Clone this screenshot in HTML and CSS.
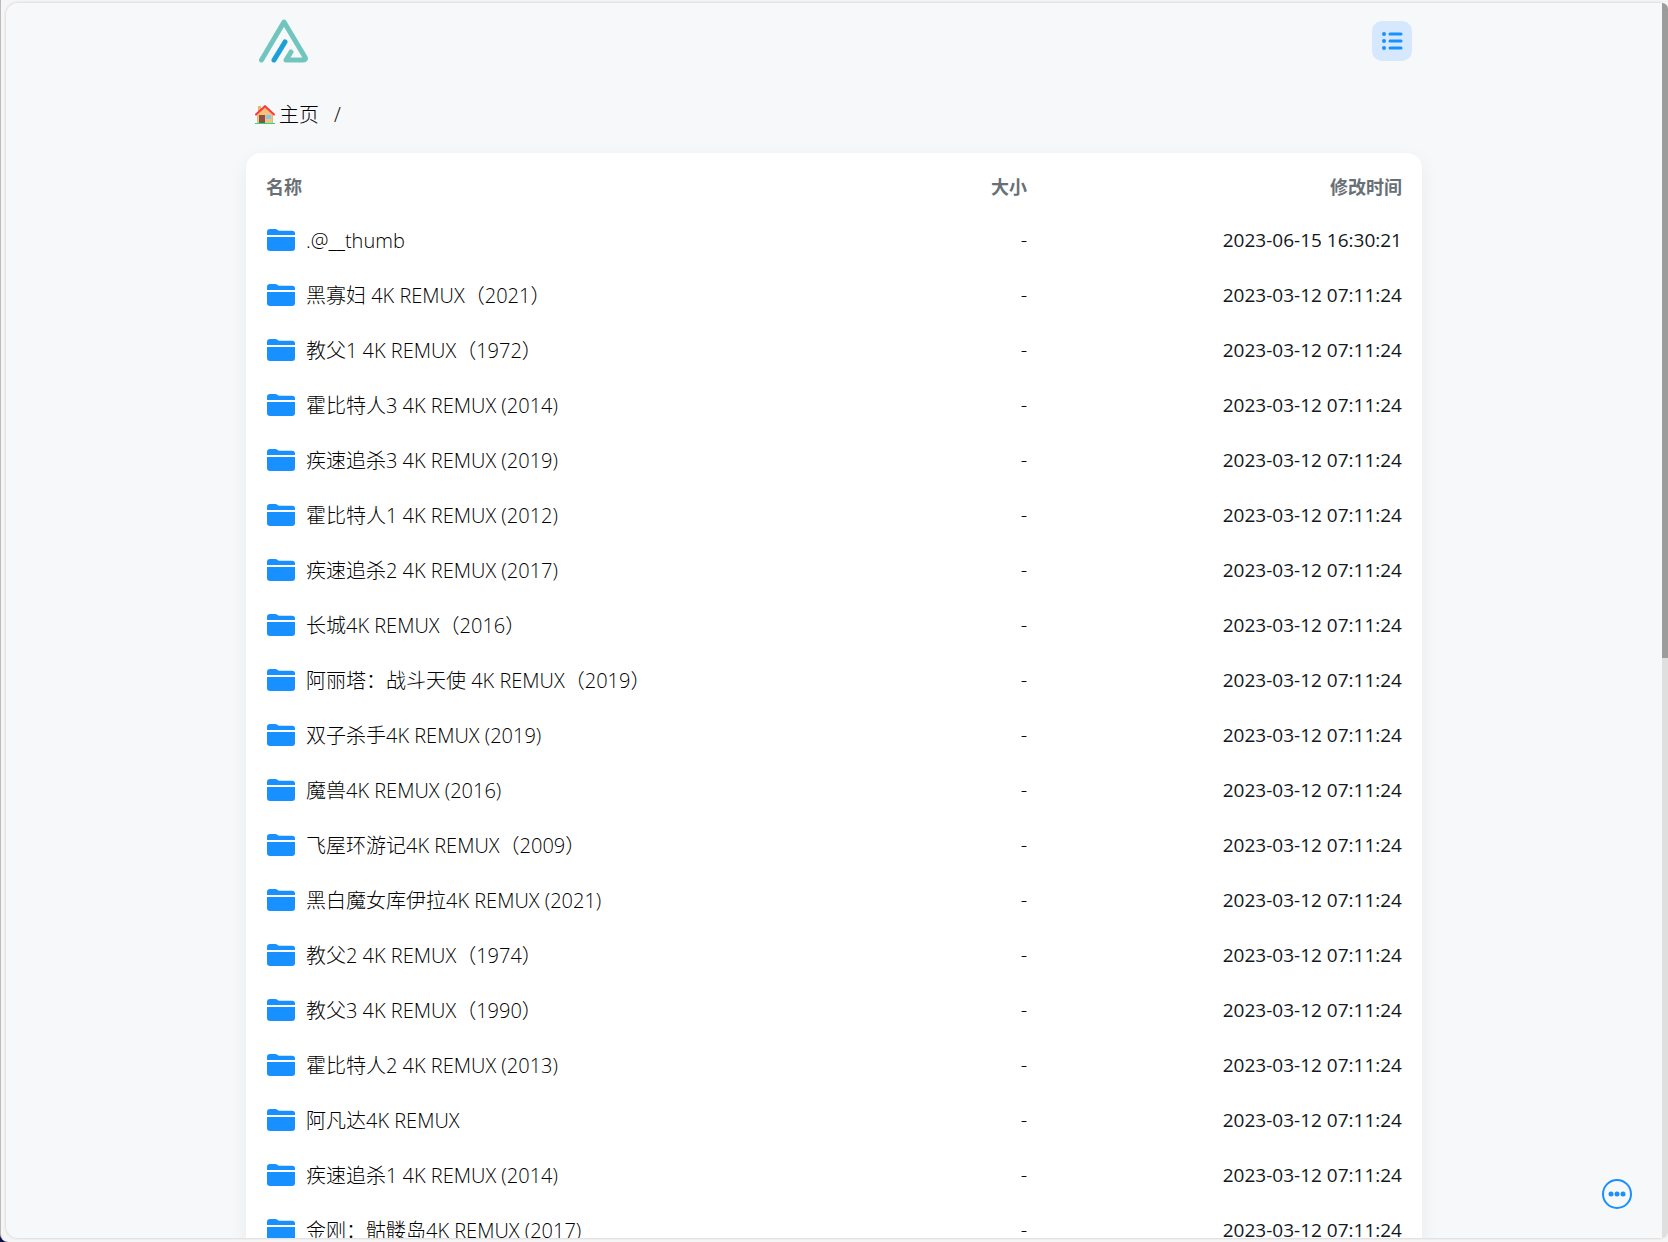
FILE: index.html
```html
<!DOCTYPE html>
<html lang="zh-CN">
<head>
    <meta charset="UTF-8">
    <meta name="viewport" content="width=device-width, initial-scale=1.0">
    <title>主页</title>
    <link rel="stylesheet" href="styles.css">
</head>
<body>

<!-- Shared icons -->
<svg class="sprite" aria-hidden="true">
    <symbol id="folder" viewBox="0 0 28 24">
        <path d="M0 7V4Q0 1 3 1H8Q9.500 1 11 2.200Q11.800 2.800 13 2.800H25Q28 2.800 28 5.500V7Z"/>
        <path d="M0 9H28V20Q28 23 25 23H3Q0 23 0 20Z"/>
    </symbol>
</svg>

<div class="frame">
    <div class="window">
        <div class="page">
            <header class="header">
                <a href="#" class="logo" aria-label="首页">
                    <svg viewBox="0 0 52 46">
                        <path stroke="#70c6be" d="M3.500 42L26 4L47.200 39.500Q48 42 45.500 42H28L33 34"/>
                        <path stroke="#1ba0d8" d="M16 42L27 24"/>
                    </svg>
                </a>
                <button class="layout-button" aria-label="列表视图">
                    <svg viewBox="0 0 24 24" stroke="currentColor" stroke-linecap="round">
                        <path stroke-width="3" d="M10 5H21M10 12H21M10 19H21"/>
                        <path stroke-width="4" d="M4 5H4.010M4 12H4.010M4 19H4.010"/>
                    </svg>
                </button>
            </header>

            <nav class="breadcrumb">
                <a href="#">
                    <svg viewBox="0 0 20 20">
                        <path fill="#f2b36b" d="M3 1H6V6H3ZM2 10L10 2L18 10V18H2Z"/>
                        <path fill="#f8c07a" d="M3 10L10 3L17 10V18H3Z"/>
                        <path fill="#8b5144" d="M4 10H10V18H4Z"/>
                        <path fill="#83c8f5" d="M11 10H16V14H11Z"/>
                        <path fill="none" stroke="#f8393c" stroke-width="2" stroke-linecap="round" d="M1 9.500L10 1.200L19 9.500"/>
                        <path fill="#07e78c" d="M0 18H20V19H0Z"/>
                    </svg>
                    主页
                </a>
                <span>/</span>
            </nav>

            <main class="card">
                <table class="files">
                    <thead>
                        <tr><th class="name">名称</th><th class="size">大小</th><th class="time">修改时间</th></tr>
                    </thead>
                    <tbody id="file-list"></tbody>
                </table>
            </main>
        </div>
    </div>
    <div class="scrollbar"><div class="thumb"></div></div>
</div>

<button class="more-button" aria-label="更多">
    <svg viewBox="0 0 30 30">
        <circle cx="15" cy="15" r="14" fill="none" stroke="currentColor" stroke-width="2"/>
        <circle cx="9" cy="15" r="2.500"/>
        <circle cx="15" cy="15" r="2.500"/>
        <circle cx="21" cy="15" r="2.500"/>
    </svg>
</button>

<script src="script.js"></script>
</body>
</html>
```

FILE: styles.css
```css
* {
    box-sizing: border-box;
}

body {
    margin: 0;
    height: 100vh;
    overflow: hidden;
    background-color: #08104a;
    color: #000;
    font-family: "Open Sans", "Noto Sans CJK SC Light", "Noto Sans CJK SC", sans-serif;
    font-size: 20px;
    font-weight: 300;
    line-height: 28px;
}

a {
    color: inherit;
    text-decoration: none;
}

button {
    border: none;
    padding: 0;
    color: #1890ff;
    cursor: pointer;
}

svg {
    display: block;
    fill: currentColor;
}

.sprite {
    display: none;
}

/* Browser frame */
.frame {
    display: flex;
    height: 100vh;
    padding: 3px 0 4px 5px;
    background-color: #f5f5f5;
    border-left: 1px solid #bbb;
    border-bottom-left-radius: 8px;
}

.window {
    flex: 1;
    overflow-y: auto;
    scrollbar-width: none;
    background-color: #f7f8fa;
    border-radius: 12px 0 0 12px;
    box-shadow: 0 0 3px rgba(0, 0, 0, 0.2);
}

.scrollbar {
    width: 6px;
    background-color: #dfdfdf;
    border-radius: 0 8px 8px 0;
    overflow: hidden;
}

.thumb {
    height: 53%;
    background-color: #9c9c9c;
}

.page {
    max-width: 1176px;
    margin: 0 auto;
    padding-bottom: 40px;
}

.header {
    display: flex;
    justify-content: space-between;
    align-items: center;
    height: 76px;
    padding: 0 10px;
}

.logo svg {
    width: 52px;
    height: 46px;
    margin-left: 2px;
    fill: none;
    stroke-width: 5px;
    stroke-linecap: round;
    stroke-linejoin: round;
}

.layout-button {
    display: flex;
    align-items: center;
    justify-content: center;
    width: 40px;
    height: 40px;
    border-radius: 10px;
    background-color: #d5e8fd;
}

.layout-button svg {
    width: 24px;
    height: 24px;
}

.breadcrumb {
    display: flex;
    align-items: center;
    gap: 15px;
    height: 72px;
    margin-bottom: 2px;
    padding: 0 9px;
}

.breadcrumb a {
    display: flex;
    align-items: center;
    gap: 4px;
}

.breadcrumb svg {
    width: 20px;
    height: 20px;
}

.card {
    padding: 8px 20px;
    border-radius: 15px;
    background-color: #fff;
    box-shadow: 0 6px 20px rgba(0, 0, 0, 0.06);
}

.files {
    width: 100%;
    table-layout: fixed;
    border-collapse: collapse;
}

.files th,
.files td {
    padding: 0;
    text-align: right;
    white-space: nowrap;
}

.files th {
    height: 51px;
    padding-bottom: 2px;
    color: #687076;
    font-family: "Noto Sans CJK SC", sans-serif;
    font-size: 18px;
    font-weight: 700;
}

.files td {
    height: 55px;
}

.files .name {
    width: 50%;
    text-align: left;
}

.files .size {
    width: 17%;
}

.files .time {
    width: 33%;
}

.files td.time {
    color: #11181c;
    font-size: 19px;
    font-weight: 400;
}

.name a {
    display: flex;
    align-items: center;
    gap: 11px;
    padding-top: 2px;
}

.name svg {
    width: 28px;
    height: 24px;
    margin: 0 0 2px 1px;
    color: #1890ff;
}

.more-button {
    position: fixed;
    right: 36px;
    bottom: 33px;
    width: 30px;
    height: 30px;
    border-radius: 50%;
    background: none;
}
```

FILE: script.js
```js
const defaultTime = '2023-03-12 07:11:24';

const files = [
    { name: '.@__thumb', time: '2023-06-15 16:30:21' },
    { name: '黑寡妇 4K REMUX（2021）' },
    { name: '教父1 4K REMUX（1972）' },
    { name: '霍比特人3 4K REMUX (2014)' },
    { name: '疾速追杀3 4K REMUX (2019)' },
    { name: '霍比特人1 4K REMUX (2012)' },
    { name: '疾速追杀2 4K REMUX (2017)' },
    { name: '长城4K REMUX（2016）' },
    { name: '阿丽塔：战斗天使 4K REMUX（2019）' },
    { name: '双子杀手4K REMUX (2019)' },
    { name: '魔兽4K REMUX (2016)' },
    { name: '飞屋环游记4K REMUX（2009）' },
    { name: '黑白魔女库伊拉4K REMUX (2021)' },
    { name: '教父2 4K REMUX（1974）' },
    { name: '教父3 4K REMUX（1990）' },
    { name: '霍比特人2 4K REMUX (2013)' },
    { name: '阿凡达4K REMUX' },
    { name: '疾速追杀1 4K REMUX (2014)' },
    { name: '金刚：骷髅岛4K REMUX (2017)' }
];

document.getElementById('file-list').innerHTML = files.map(file => `
    <tr>
        <td class="name"><a href="#"><svg aria-hidden="true"><use href="#folder"/></svg><span>${file.name}</span></a></td>
        <td class="size">-</td>
        <td class="time">${file.time || defaultTime}</td>
    </tr>
`).join('');
```
